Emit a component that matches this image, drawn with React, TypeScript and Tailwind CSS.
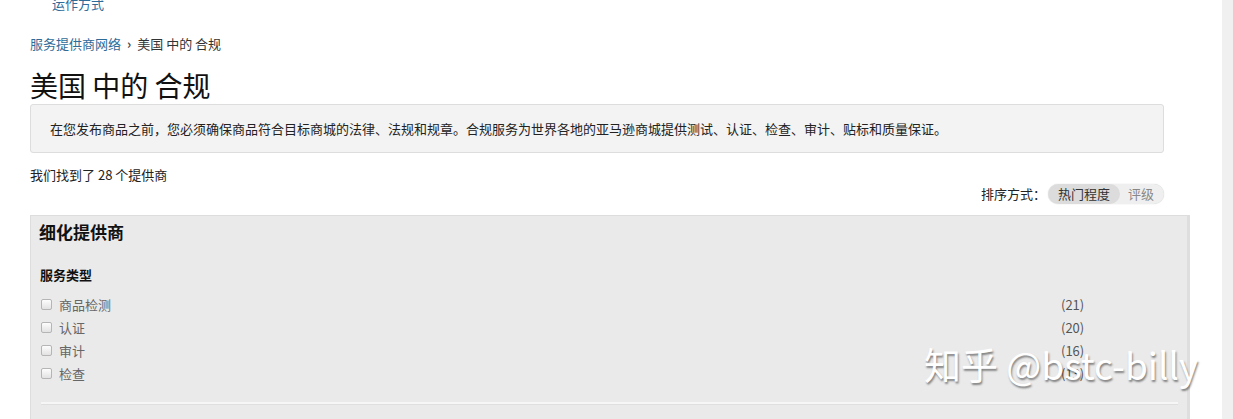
const services = [
  { name: '商品检测', count: 21 },
  { name: '认证', count: 20 },
  { name: '审计', count: 16 },
  { name: '检查', count: 13 },
]

export default function App() {
  return (
    <div className="relative flex w-[1233px] h-[419px] overflow-hidden bg-white font-['Noto_Sans_CJK_SC',sans-serif] text-[#111]">
      {/* Page */}
      <div className="flex-1 pl-[30px]">
        {/* top nav leftover */}
        <div className="-mt-[2px] pl-[22px] h-[14px] text-[13px] leading-[12px] text-[#2f6b98]">运作方式</div>

        {/* Breadcrumb */}
        <div className="mt-[23px] flex items-center h-[18px] text-[13px] leading-[18px]">
          <span className="text-[#2f6b98]">服务提供商网络</span>
          <span className="mx-[6px] text-[#444] text-[13px] font-bold">›</span>
          <span className="text-[#333]">美国 中的 合规</span>
        </div>

        <h1 className="mt-[15px] h-[34px] text-[28px] leading-[34px] font-normal text-[#111]">美国 中的 合规</h1>

        <div className="w-[1134px]">
          {/* Info box */}
          <div className="mt-[2px] h-[49px] flex items-center pl-[19px] bg-[#f3f3f3] border border-[#dddddd] rounded-[3px] text-[13px] text-[#222]">
            在您发布商品之前，您必须确保商品符合目标商城的法律、法规和规章。合规服务为世界各地的亚马逊商城提供测试、认证、检查、审计、贴标和质量保证。
          </div>

          <div className="mt-[13px] h-[18px] text-[13px] leading-[18px] text-[#222]">我们找到了 28 个提供商</div>

          {/* Sort */}
          <div className="flex items-center justify-end h-[20px] text-[13px]">
            <span className="text-[#222] mr-[2px]">排序方式：</span>
            <div className="flex h-[20px] rounded-full bg-[#efefef] shadow-[0_0_1px_rgba(0,0,0,0.25)] overflow-hidden">
              <span className="flex items-center px-[10px] rounded-full bg-[#dcdcdc] text-[#333]">热门程度</span>
              <span className="flex items-center pl-[8px] pr-[10px] text-[#888]">评级</span>
            </div>
          </div>
        </div>

        {/* Refine panel */}
        <div className="mt-[11px] w-[1160px] h-[300px] bg-[#eaeaea] border-l border-t border-r-[3px] border-r-[#dedede] border-[#dddddd] pl-[8px] pr-[10px]">
          <div className="mt-[4px] h-[24px] text-[17px] leading-[24px] font-bold text-[#111]">细化提供商</div>
          <div className="mt-[22px] pl-[1px] h-[18px] text-[13px] leading-[18px] font-bold text-[#111]">服务类型</div>

          <div className="mt-[9px] pl-[2px]">
            {services.map((s) => (
              <div key={s.name} className="flex items-center h-[23px] text-[13px]">
                <span className="w-[11px] h-[11px] border border-[#b5b5b5] rounded-[2px] bg-gradient-to-b from-[#fdfdfd] to-[#e2e2e2]" />
                <span className="ml-[7px] w-[1002px] text-[#666]">{s.name}</span>
                <span className="text-[#555]">({s.count})</span>
              </div>
            ))}
          </div>

          <div className="mt-[17px] ml-[2px] w-[1137px] h-[3px] bg-[#f6f6f6] border-b border-[#dfdfdf]" />
        </div>
      </div>

      {/* scrollbar track */}
      <div className="w-[11px] bg-[#f0f0f0]" />

      {/* watermark */}
      <div className="absolute left-[924px] top-[339px] text-[37px] leading-[50px] text-white [text-shadow:1px_2px_2px_rgba(0,0,0,0.45)]">
        知乎 @bstc-billy
      </div>
    </div>
  )
}
